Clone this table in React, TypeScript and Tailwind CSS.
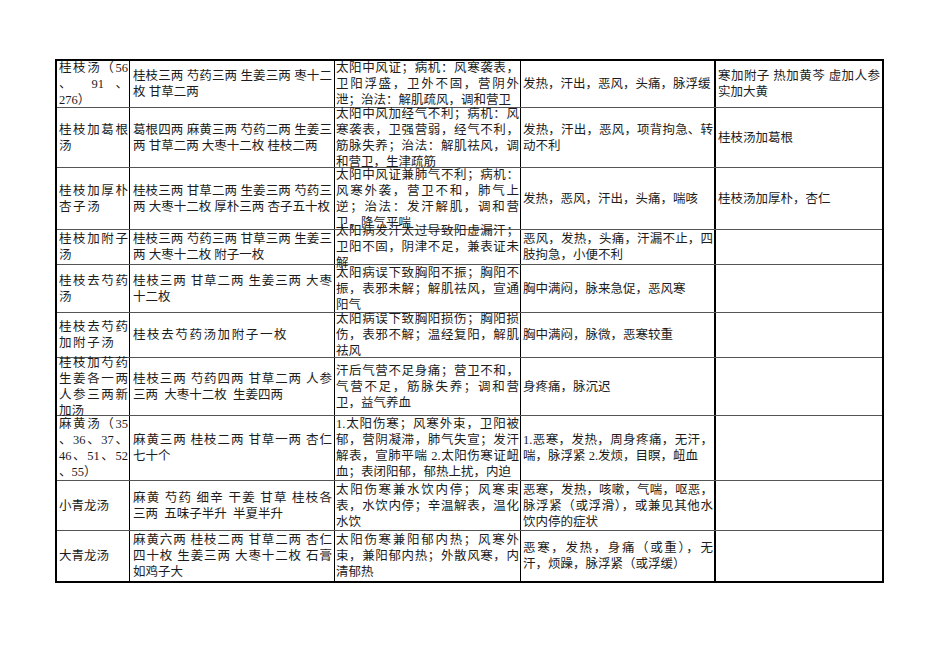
type Row = { h: string; cells: string[][]; spread?: number[] };

const rows: Row[] = [
  {
    h: "h-[47px]",
    cells: [
      ["桂枝汤（56", "、 91 、", "276）"],
      ["桂枝三两 芍药三两 生姜三两 枣十二", "枚 甘草二两"],
      ["太阳中风证；病机：风寒袭表，", "卫阳浮盛，卫外不固，营阴外", "泄；治法：解肌疏风，调和营卫"],
      ["发热，汗出，恶风，头痛，脉浮缓"],
      ["寒加附子 热加黄芩 虚加人参", "实加大黄"],
    ],
  },
  {
    h: "h-[60px]",
    cells: [
      ["桂枝加葛根", "汤"],
      ["葛根四两 麻黄三两 芍药二两 生姜三", "两 甘草二两 大枣十二枚 桂枝二两"],
      ["太阳中风加经气不利；病机：风", "寒袭表，卫强营弱，经气不利，", "筋脉失养；治法：解肌祛风，调", "和营卫，生津疏筋"],
      ["发热，汗出，恶风，项背拘急、转", "动不利"],
      ["桂枝汤加葛根"],
    ],
  },
  {
    h: "h-[62px]",
    cells: [
      ["桂枝加厚朴", "杏子汤"],
      ["桂枝三两 甘草二两 生姜三两 芍药三", "两 大枣十二枚 厚朴三两 杏子五十枚"],
      ["太阳中风证兼肺气不利；病机：", "风寒外袭，营卫不和，肺气上", "逆；治法：发汗解肌，调和营", "卫，降气平喘"],
      ["发热，恶风，汗出，头痛，喘咳"],
      ["桂枝汤加厚朴，杏仁"],
    ],
    spread: [0],
  },
  {
    h: "h-[35px]",
    cells: [
      ["桂枝加附子", "汤"],
      ["桂枝三两 芍药三两 甘草三两 生姜三", "两 大枣十二枚 附子一枚"],
      ["太阳病发汗太过导致阳虚漏汗；", "卫阳不固，阴津不足，兼表证未", "解"],
      ["恶风，发热，头痛，汗漏不止，四", "肢拘急，小便不利"],
      [],
    ],
  },
  {
    h: "h-[48px]",
    cells: [
      ["桂枝去芍药", "汤"],
      ["桂枝三两  甘草二两  生姜三两  大枣", "十二枚"],
      ["太阳病误下致胸阳不振；胸阳不", "振，表邪未解；解肌祛风，宣通", "阳气"],
      ["胸中满闷，脉来急促，恶风寒"],
      [],
    ],
  },
  {
    h: "h-[45px]",
    cells: [
      ["桂枝去芍药", "加附子汤"],
      ["桂枝去芍药汤加附子一枚"],
      ["太阳病误下致胸阳损伤；胸阳损", "伤，表邪不解；温经复阳，解肌", "祛风"],
      ["胸中满闷，脉微，恶寒较重"],
      [],
    ],
    spread: [0, 1],
  },
  {
    h: "h-[58px]",
    cells: [
      ["桂枝加芍药", "生姜各一两", "人参三两新", "加汤"],
      ["桂枝三两  芍药四两  甘草二两  人参", "三两  大枣十二枚  生姜四两"],
      ["汗后气营不足身痛；营卫不和，", "气营不足，筋脉失养；调和营", "卫，益气养血"],
      ["身疼痛，脉沉迟"],
      [],
    ],
  },
  {
    h: "h-[65px]",
    cells: [
      ["麻黄汤（35", "、36、37、", "46、51、52", "、55）"],
      ["麻黄三两  桂枝二两  甘草一两  杏仁", "七十个"],
      ["1.太阳伤寒；风寒外束，卫阳被", "郁，营阴凝滞，肺气失宣；发汗", "解表，宣肺平喘 2.太阳伤寒证衄", "血；表闭阳郁，郁热上扰，内迫"],
      ["1.恶寒，发热，周身疼痛，无汗，", "喘，脉浮紧 2.发烦，目瞑，衄血"],
      [],
    ],
  },
  {
    h: "h-[50px]",
    cells: [
      ["小青龙汤"],
      ["麻黄  芍药  细辛  干姜  甘草  桂枝各", "三两  五味子半升  半夏半升"],
      ["太阳伤寒兼水饮内停；风寒束", "表，水饮内停；辛温解表，温化", "水饮"],
      ["恶寒，发热，咳嗽，气喘，呕恶，", "脉浮紧（或浮滑），或兼见其他水", "饮内停的症状"],
      [],
    ],
  },
  {
    h: "h-[50px]",
    cells: [
      ["大青龙汤"],
      ["麻黄六两  桂枝二两  甘草二两  杏仁", "四十枚  生姜三两  大枣十二枚  石膏", "如鸡子大"],
      ["太阳伤寒兼阳郁内热；风寒外", "束，兼阳郁内热；外散风寒，内", "清郁热"],
      ["恶寒，发热，身痛（或重），无", "汗，烦躁，脉浮紧（或浮缓）"],
      [],
    ],
  },
];

const colClass = [
  "w-[73px] border-r border-black pl-[2px] pr-[1px]",
  "w-[205px] border-r border-black pl-[3px] pr-[2px]",
  "w-[186px] border-r border-black pl-[1px] pr-[1px]",
  "w-[195px] border-r-2 border-black pl-[2px] pr-[1px]",
  "flex-1 pl-[2px] pr-[2px]",
];

function Cell({ lines, col, spread }: { lines: string[]; col: number; spread: boolean }) {
  return (
    <div className={`shrink-0 flex flex-col justify-center ${colClass[col]}`}>
      {lines.map((l, i) => {
        const last = i === lines.length - 1;
        return (
          <div
            key={i}
            className={
              "whitespace-pre leading-4 " +
              (last ? (spread ? "tracking-[1.6px]" : "") : "[text-align-last:justify] text-justify")
            }
          >
            {last ? l : l.replace(/  /g, " ")}
          </div>
        );
      })}
    </div>
  );
}

export default function App() {
  return (
    <div className="min-h-screen bg-white pt-[59px] pl-[55px] font-['Liberation_Serif','Noto_Sans_CJK_SC',serif] text-[12.5px] text-[#1c1c1c]">
      <div className="w-[829px] border-2 border-black">
        {rows.map((r, ri) => (
          <div
            key={ri}
            className={`flex ${r.h} ${ri < rows.length - 1 ? "border-b border-[#555]" : ""}`}
          >
            {r.cells.map((c, ci) => (
              <Cell key={ci} lines={c} col={ci} spread={!!r.spread && r.spread.includes(ci)} />
            ))}
          </div>
        ))}
      </div>
    </div>
  );
}
